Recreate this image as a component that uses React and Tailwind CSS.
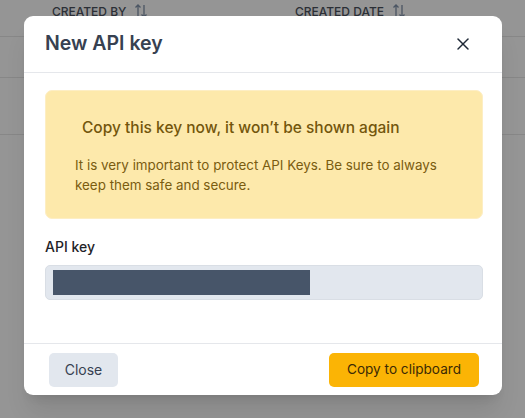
import React from "react";
import { X } from "lucide-react";

const SortIcon = () => (
  <svg width="14" height="16" viewBox="0 0 14 16" fill="none" stroke="#4b5563" strokeWidth="1.3" className="inline-block ml-2">
    <path d="M4 14V2M1.5 4.5L4 2l2.5 2.5" />
    <path d="M10 2v12M7.5 11.5L10 14l2.5-2.5" />
  </svg>
);

export default function App() {
  return (
    <div
      className="relative w-[525px] h-[418px] overflow-hidden bg-[#959595]"
      style={{ fontFamily: "Inter, 'Noto Sans', sans-serif" }}
    >
      {/* table behind the overlay */}
      <div className="flex flex-col">
        <div className="flex h-[37px] pt-[3px] text-[12px] font-medium text-[#2b2f36] border-b border-[#878787]">
          <div className="w-[295px] pl-[52px] flex items-start">
            CREATED BY <SortIcon />
          </div>
          <div className="flex items-start">
            CREATED DATE <SortIcon />
          </div>
        </div>
        <div className="h-[41px] border-b border-[#878787]" />
        <div className="h-[57px] border-b border-[#878787]" />
      </div>

      {/* modal */}
      <div className="absolute left-[24px] top-[16px] w-[478px] h-[379px] bg-white rounded-[9px] shadow-xl flex flex-col">
        <div className="h-[57px] flex items-center justify-between pl-[21px] pr-[29px] border-b border-[#e5e7eb]">
          <h2 className="text-[19.5px] font-semibold text-[#374151]">New API key</h2>
          <X size={20} strokeWidth={1.8} className="text-[#1f2937]" />
        </div>
        <div className="flex-1 pl-[21px] pr-[19px] pt-[17px]">
          <div className="h-[129px] rounded-[7px] bg-[#fde9ab] border border-[#fdeec4] pl-[29px] pr-[30px] pt-[26px]">
            <p className="text-[15.5px] font-medium text-[#73560c] pl-[7px] leading-[22px]">
              Copy this key now, it won’t be shown again
            </p>
            <p className="mt-[16px] text-[13.4px] leading-[20px] text-[#7a5c10]">
              It is very important to protect API Keys. Be sure to always keep them safe and secure.
            </p>
          </div>
          <label className="block mt-[18px] text-[14px] font-medium text-[#1f2328] leading-[20px]">API key</label>
          <div className="mt-[8px] h-[35px] rounded-[5px] bg-[#e2e7ee] border border-[#d9dee5] flex items-center px-[7px]">
            <div className="w-[257px] h-[25px] bg-[#475569]" />
          </div>
        </div>
        <div className="h-[52px] border-t border-[#e5e7eb] flex items-center justify-between pl-[25px] pr-[23px]">
          <button className="h-[34px] w-[69px] rounded-[5px] bg-[#e2e7ee] text-[14px] text-[#374151]">
            Close
          </button>
          <button className="h-[34px] w-[150px] rounded-[5px] bg-[#fbb405] text-[13.6px] text-[#3b2a05]">
            Copy to clipboard
          </button>
        </div>
      </div>
    </div>
  );
}
